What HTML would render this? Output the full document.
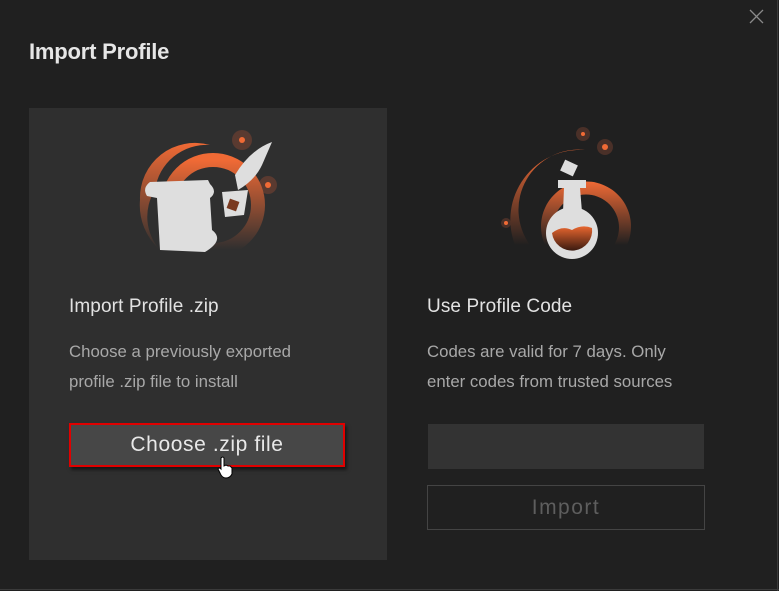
<!DOCTYPE html>
<html><head><meta charset="utf-8"><style>
html,body{margin:0;padding:0;}
body{width:779px;height:591px;background:#202020;position:relative;overflow:hidden;font-family:"Liberation Sans",sans-serif;}
.edge-r{position:absolute;left:777px;top:0;width:1px;height:591px;background:#3a3a3a;}
.edge-b{position:absolute;left:0;top:589px;width:779px;height:1px;background:#3a3a3a;}
h1{position:absolute;left:29px;top:39px;margin:0;font-size:22px;font-weight:bold;color:#e6e6e6;letter-spacing:-0.2px;}
.close{position:absolute;left:749px;top:9px;}
.card{position:absolute;left:29px;top:108px;width:358px;height:452px;background:#2f2f2f;}
.t{position:absolute;font-size:19px;color:#e2e2e2;letter-spacing:0.1px;}
.d{position:absolute;font-size:16.8px;color:#a8a8a8;line-height:30px;}
.btn{position:absolute;left:69px;top:423px;width:276px;height:44px;background:#474747;border:2px solid #e00000;box-sizing:border-box;color:#e8e8e8;font-size:21px;letter-spacing:0.6px;text-align:center;line-height:40px;box-shadow:2px 3px 3px rgba(0,0,0,.5);}
.inp{position:absolute;left:428px;top:424px;width:276px;height:45px;background:#333;}
.imp{position:absolute;left:427px;top:485px;width:278px;height:45px;border:1px solid #444;box-sizing:border-box;color:#5e5e5e;font-size:21px;letter-spacing:1.5px;text-align:center;line-height:43px;}
</style></head><body>
<div class="edge-r"></div><div class="edge-b"></div>
<h1>Import Profile</h1>
<svg class="close" width="15" height="15" viewBox="0 0 15 15"><path d="M1 1L14 14M14 1L1 14" stroke="#8a8a8a" stroke-width="1.3"/></svg>
<div class="card"></div>
<svg style="position:absolute;left:130px;top:120px" width="160" height="150" viewBox="0 0 160 150">
<defs><linearGradient id="g1" x1="0" y1="0" x2="0" y2="1"><stop offset="0" stop-color="#f06a35"/><stop offset="1" stop-color="#2f2f2f"/></linearGradient></defs>
<circle cx="112" cy="20" r="10" fill="#5a3a30"/><circle cx="112" cy="20" r="3" fill="#f06a35"/>
<circle cx="138" cy="65" r="9" fill="#5a3a30"/><circle cx="138" cy="65" r="3" fill="#f06a35"/>
<path d="M80 25 A55 55 0 0 0 10 80 A60 60 0 0 0 30 130 A50 50 0 0 1 25 70 A52 52 0 0 1 80 25Z" fill="url(#g1)"/>
<circle cx="83" cy="85" r="45" fill="none" stroke="url(#g1)" stroke-width="14"/>
<path d="M20 62 Q12 68 17 76 L27 78 L30 130 L75 132 Q95 120 82 110 L80 78 Q88 72 80 64 L78 60Z" fill="#dedede"/>
<path d="M92 72 L118 70 L114 95 L95 97Z" fill="#dedede"/><rect x="98" y="80" width="10" height="10" fill="#7a3a20" transform="rotate(20 103 85)"/>
<path d="M142 22 Q120 30 105 55 L108 70 Q125 60 132 45Z" fill="#dedede"/>
</svg>
<svg style="position:absolute;left:490px;top:120px" width="150" height="150" viewBox="0 0 150 150">
<defs><linearGradient id="g2" x1="0" y1="0" x2="0" y2="1"><stop offset="0" stop-color="#f06a35"/><stop offset="1" stop-color="#202020"/></linearGradient><linearGradient id="g3" x1="0" y1="0" x2="0" y2="1"><stop offset="0" stop-color="#e8662f"/><stop offset="1" stop-color="#3a1a10"/></linearGradient></defs>
<circle cx="93" cy="14" r="7" fill="#4a3028"/><circle cx="93" cy="14" r="2" fill="#f06a35"/>
<circle cx="115" cy="27" r="8" fill="#4a3028"/><circle cx="115" cy="27" r="3" fill="#f06a35"/>
<circle cx="16" cy="103" r="5" fill="#4a3028"/><circle cx="16" cy="103" r="2" fill="#f06a35"/>
<path d="M95 30 A70 70 0 0 0 25 125 L40 125 A60 60 0 0 1 95 30Z" fill="url(#g2)"/>
<path d="M55 125 A45 45 0 1 1 137 125 L124 125 A33 33 0 1 0 68 125Z" fill="url(#g2)"/>
<rect x="72" y="42" width="14" height="12" fill="#dedede" transform="rotate(25 79 48)"/>
<rect x="68" y="60" width="28" height="8" fill="#dedede"/><path d="M74 68 L90 68 L92 92 L73 92Z" fill="#dedede"/>
<circle cx="82" cy="113" r="26" fill="#dedede"/><path d="M62 113 Q72 105 82 110 Q92 104 102 108 A20 20 0 0 1 62 113Z" fill="url(#g3)"/>
</svg>
<div class="t" style="left:69px;top:296px">Import Profile .zip</div>
<div class="d" style="left:69px;top:337px">Choose a previously exported<br>profile .zip file to install</div>
<div class="btn">Choose .zip file</div>
<div class="t" style="left:427px;top:296px">Use Profile Code</div>
<div class="d" style="left:427px;top:337px">Codes are valid for 7 days. Only<br>enter codes from trusted sources</div>
<div class="inp"></div>
<div class="imp">Import</div>
<svg style="position:absolute;left:217px;top:456px" width="18" height="24" viewBox="0 0 18 24"><path d="M4 2 Q6 0 7 2 L7 10 L9 9 L11 10 L13 10 L15 12 L15 18 Q13 22 9 22 Q5 22 3 17 L1 13 Q2 11 4 13Z" fill="#fff" stroke="#000" stroke-width="1"/></svg>
</body></html>
